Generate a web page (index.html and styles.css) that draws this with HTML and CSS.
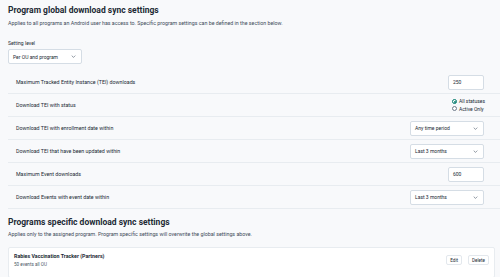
FILE: index.html
```html
<!DOCTYPE html>
<html>
<head>
<meta charset="utf-8">
<link rel="stylesheet" href="styles.css">
</head>
<body>
<div class="page">
  <h1 class="title">Program global download sync settings</h1>
  <p class="sub">Applies to all programs an Android user has access to. Specific program settings can be defined in the section below.</p>

  <div class="level">
    <div class="level-label">Setting level</div>
    <div class="select level-select"><span>Per OU and program</span><svg class="chev" viewBox="0 0 8 5"><path d="M1 1l3 3 3-3" fill="none" stroke="#4a5768" stroke-width="1"/></svg></div>
  </div>

  <div class="rows">
    <div class="row"><span class="label">Maximum Tracked Entity Instance (TEI) downloads</span><div class="input">250</div></div>
    <div class="row"><span class="label">Download TEI with status</span>
      <div class="radios">
        <div class="radio"><span class="dot on"></span>All statuses</div>
        <div class="radio"><span class="dot"></span>Active Only</div>
      </div>
    </div>
    <div class="row"><span class="label">Download TEI with enrollment date within</span><div class="select"><span>Any time period</span><svg class="chev" viewBox="0 0 8 5"><path d="M1 1l3 3 3-3" fill="none" stroke="#4a5768" stroke-width="1"/></svg></div></div>
    <div class="row"><span class="label">Download TEI that have been updated within</span><div class="select"><span>Last 3 months</span><svg class="chev" viewBox="0 0 8 5"><path d="M1 1l3 3 3-3" fill="none" stroke="#4a5768" stroke-width="1"/></svg></div></div>
    <div class="row"><span class="label">Maximum Event downloads</span><div class="input">600</div></div>
    <div class="row"><span class="label">Download Events with event date within</span><div class="select"><span>Last 3 months</span><svg class="chev" viewBox="0 0 8 5"><path d="M1 1l3 3 3-3" fill="none" stroke="#4a5768" stroke-width="1"/></svg></div></div>
  </div>

  <h2 class="title title2">Programs specific download sync settings</h2>
  <p class="sub sub2">Applies only to the assigned program. Program specific settings will overwrite the global settings above.</p>

  <div class="card">
    <div class="card-text">
      <div class="card-title">Rabies Vaccination Tracker (Partners)</div>
      <div class="card-meta">50 events all OU</div>
    </div>
    <div class="actions">
      <span class="btn">Edit</span>
      <span class="btn">Delete</span>
    </div>
  </div>
</div>
</body>
</html>
```
FILE: styles.css
```css
html, body {
  margin: 0;
  padding: 0;
  background: #f8f9fb;
}
body {
  font-family: Roboto, "Liberation Sans", sans-serif;
  color: #212934;
  width: 500px;
  height: 277px;
  overflow: hidden;
}
.page {
  padding: 5px 8px 0 8px;
}
.title {
  margin: 0;
  font-size: 8.5px;
  font-weight: 700;
  line-height: 11px;
  color: #212934;
}
.sub {
  margin: 4px 0 0 0;
  font-size: 5.3px;
  line-height: 7px;
  color: #404b5a;
}
.sub2 {
  margin-top: 3px;
}
.level {
  margin-top: 13px;
}
.level-label {
  font-size: 5px;
  line-height: 7px;
  color: #212934;
}
.select {
  box-sizing: border-box;
  width: 74px;
  height: 15px;
  background: #fff;
  border: 1px solid #d5dde5;
  border-radius: 2px;
  display: flex;
  align-items: center;
  justify-content: space-between;
  padding: 0 5px 0 4px;
  font-size: 5px;
  color: #212934;
}
.level-select {
  margin-top: 2px;
}
.chev {
  width: 5px;
  height: 3px;
}
.rows {
  margin-top: 7px;
  margin-right: -8px;
}
.row {
  height: 23px;
  box-sizing: border-box;
  border-bottom: 1px solid #e8ecf0;
  display: flex;
  align-items: center;
  justify-content: space-between;
  padding: 0 16px 0 8px;
}
.label {
  font-size: 5.3px;
  color: #212934;
}
.input {
  box-sizing: border-box;
  width: 36px;
  height: 15px;
  background: #fff;
  border: 1px solid #d5dde5;
  border-radius: 2px;
  display: flex;
  align-items: center;
  padding-left: 4px;
  font-size: 5px;
}
.radios {
  display: flex;
  flex-direction: column;
  gap: 1px;
  margin-right: -1px;
}
.radio {
  display: flex;
  align-items: center;
  gap: 2px;
  font-size: 5px;
  line-height: 6.5px;
}
.dot {
  box-sizing: border-box;
  width: 5px;
  height: 5px;
  border-radius: 50%;
  border: 0.6px solid #6e7a8a;
  background: #fff;
  position: relative;
}
.dot.on {
  border-color: #00796b;
}
.dot.on::after {
  content: "";
  position: absolute;
  left: 1px;
  top: 1px;
  width: 2px;
  height: 2px;
  border-radius: 50%;
  background: #00796b;
}
.title2 {
  margin-top: 8px;
}
.card {
  margin-top: 9px;
  margin-right: -3px;
  box-sizing: border-box;
  height: 31px;
  background: #fff;
  border: 1px solid #e8ecf0;
  border-radius: 2px;
  display: flex;
  align-items: flex-start;
  justify-content: space-between;
  padding: 5px 5px 0 5px;
}
.card-title {
  font-size: 5.3px;
  font-weight: 700;
  color: #212934;
  line-height: 7px;
}
.card-meta {
  margin-top: 2px;
  font-size: 4.6px;
  color: #4a5768;
  line-height: 6px;
}
.actions {
  display: flex;
  gap: 6px;
  margin-top: 2px;
}
.btn {
  box-sizing: border-box;
  height: 10px;
  border: 1px solid #e3e8ed;
  border-radius: 2px;
  background: #fff;
  font-size: 4.6px;
  display: flex;
  align-items: center;
  padding: 0 3px;
  color: #212934;
}
```
